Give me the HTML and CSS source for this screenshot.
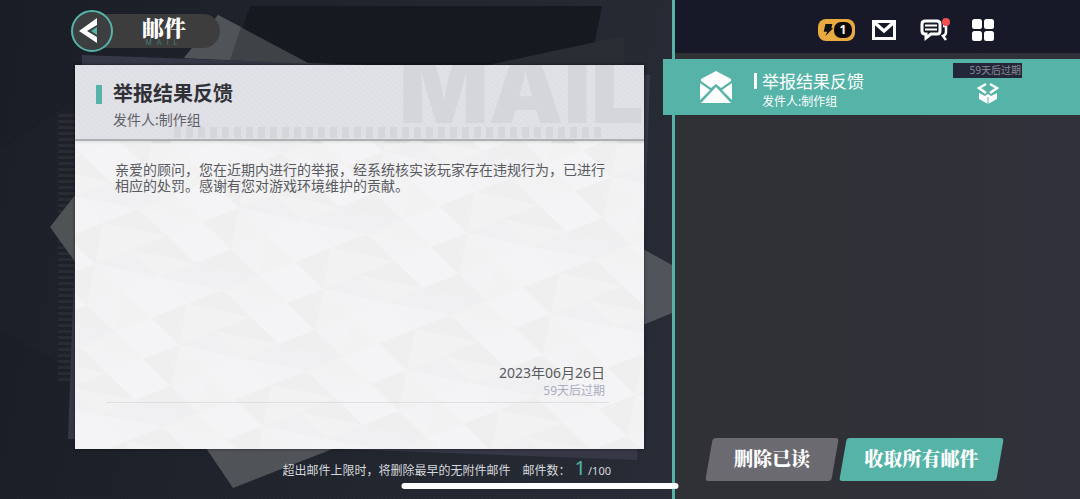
FILE: index.html
```
<!DOCTYPE html>
<html lang="zh-CN">
<head>
    <meta charset="utf-8">
    <meta name="viewport" content="width=device-width, initial-scale=1">
    <title>邮件</title>
    <link rel="stylesheet" href="styles.css">
</head>
<body>
    <main class="reader">
        <svg class="backdrop" viewBox="0 0 672 499" preserveAspectRatio="none" aria-hidden="true">
            <defs>
                <pattern id="dashes" width="20" height="6" patternUnits="userSpaceOnUse">
                    <rect width="20" height="3" fill="#2b2e34"/>
                </pattern>
                <pattern id="weave" width="4" height="4" patternUnits="userSpaceOnUse">
                    <path d="M0 0h1v1H0zM2 2h1v1H2z" fill="#fff" fill-opacity=".035"/>
                </pattern>
            </defs>
            <path d="M250 6H602L590 66H230z" fill="#15181f"/>
            <path d="M0 150L90 90V380L0 330z" fill="#fff" fill-opacity=".012"/>
            <rect width="672" height="499" fill="url(#weave)"/>
            <path d="M58 114H76V382H58z" fill="url(#dashes)" opacity=".8"/>
            <path d="M82 55L650 75L637 460L68 439z" fill="#363847"/>
            <path d="M218 15L310 64L184 58z" fill="#3f4246"/>
            <path d="M218 15L241 27L230 60L184 58z" fill="#505458"/>
            <path d="M488 65L624 36V65z" fill="#2a2e34"/>
            <path d="M50 227L76 194V263z" fill="#505356"/>
            <path d="M206 448L233 488L335 448z" fill="#505459"/>
            <path d="M643 249L672 265V313L643 325z" fill="#50545b"/>
        </svg>

        <header class="title-bar">
            <button class="back" type="button" aria-label="返回">
                <svg viewBox="0 0 42 42">
                    <circle cx="21" cy="21" r="20" fill="#3d3e3f" stroke="#55b3a7" stroke-width="2"/>
                    <path d="M26 8V15L16 21L26 27V33L8 21z" fill="#fff"/>
                    <path d="M26 17V25L20 21z" fill="#55b3a7"/>
                </svg>
            </button>
            <div class="title-pill">
                <h1>邮件</h1>
                <span>MAIL</span>
            </div>
        </header>

        <article class="letter">
            <header class="letter-head">
                <span class="watermark" aria-hidden="true">MAIL</span>
                <h2>举报结果反馈</h2>
                <p>发件人:制作组</p>
            </header>
            <div class="letter-body">
                <svg class="facets" aria-hidden="true">
                    <defs>
                        <pattern id="facet" width="4" height="3" patternUnits="userSpaceOnUse" patternTransform="matrix(36 -14 28 27 8 14)">
                            <path d="M0 0H1V1H0zM2 1H3V2H2zM1 2H2V3H1z" fill="#f5f6f8"/>
                            <path d="M1 0H2L1 1zM3 0H4V1zM0 1H1V2zM2 2H3L2 3zM3 2H4V3z" fill="#ececed"/>
                            <path d="M2 0L3 1H2zM1 1H2L1 2zM3 1L4 2H3zM0 2L1 3H0z" fill="#f4f4f6"/>
                            <path d="M2 0H3V1zM3 1H4V2zM0 1L1 2H0z" fill="#eeeef1"/>
                        </pattern>
                    </defs>
                    <rect width="100%" height="100%" fill="url(#facet)" opacity=".5"/>
                </svg>
                <p class="message">亲爱的顾问，您在近期内进行的举报，经系统核实该玩家存在违规行为，已进行相应的处罚。感谢有您对游戏环境维护的贡献。</p>
                <div class="signed">
                    <time datetime="2023-06-26">2023年06月26日</time>
                    <span>59天后过期</span>
                </div>
            </div>
        </article>

        <footer class="capacity">
            <span>超出邮件上限时，将删除最早的无附件邮件</span>
            <span>邮件数：</span>
            <span class="count"><b>1</b>/100</span>
        </footer>
    </main>

    <aside class="inbox">
        <nav class="toolbar">
            <button type="button" aria-label="体力 1" class="energy">
                <svg viewBox="0 0 14 16"><path d="M4 1H12L11 6H13L4 15L6 10H2z" fill="#111"/></svg>
                <span>1</span>
            </button>
            <button type="button" aria-label="邮件">
                <svg width="24" height="20" viewBox="0 0 24 20">
                    <path d="M1.500 1.500H22.500V18.500H1.500z" fill="none" stroke="#fff" stroke-width="3"/>
                    <path d="M3 3L12 11L21 3" fill="none" stroke="#fff" stroke-width="3.500"/>
                </svg>
            </button>
            <button type="button" aria-label="聊天">
                <svg width="30" height="24" viewBox="0 0 30 24">
                    <path d="M5 3H17Q20 3 20 6V13Q20 16 17 16H11L6 20V16H5Q2 16 2 13V6Q2 3 5 3z" fill="none" stroke="#fff" stroke-width="3"/>
                    <path d="M5 7.500H17M5 11.500H17" stroke="#fff" stroke-width="2"/>
                    <path d="M23 8H26V14Q26 17 23 18L26 22" fill="none" stroke="#fff" stroke-width="2.500"/>
                    <circle cx="26" cy="4" r="4" fill="#ef514f"/>
                </svg>
            </button>
            <button type="button" aria-label="菜单">
                <svg width="22" height="22" viewBox="0 0 22 22" fill="#fff">
                    <rect width="10" height="10" rx="2.500"/>
                    <rect x="12" width="10" height="10" rx="2.500"/>
                    <rect y="12" width="10" height="10" rx="2.500"/>
                    <rect x="12" y="12" width="10" height="10" rx="2.500"/>
                </svg>
            </button>
        </nav>

        <ul class="mails">
            <li>
                <button class="mail" type="button">
                    <svg class="envelope" viewBox="0 0 32 32" fill="#fff">
                        <path d="M16 0L31 8V10L21 17L16 13L11 17L1 10V8z"/>
                        <path d="M0 12L10 19L0 29zM32 12L22 19L32 29z"/>
                        <path d="M16 16L31 32H1z"/>
                    </svg>
                    <span class="summary">
                        <span class="subject">举报结果反馈</span>
                        <span class="sender">发件人:制作组</span>
                    </span>
                    <span class="status">
                        <span class="expiry">59天后过期</span>
                        <svg width="24" height="22" viewBox="0 0 24 22">
                            <path d="M10 2L3 6L10 11M14 2L21 6L14 11" fill="none" stroke="#fff" stroke-width="2.500"/>
                            <path d="M3 11L9 14L12 12L15 14L21 11V17L12 22L3 17z" fill="#fff"/>
                            <path d="M12 15V22" stroke="#55b3a7"/>
                        </svg>
                    </span>
                </button>
            </li>
        </ul>

        <div class="actions">
            <button class="action" type="button">删除已读</button>
            <button class="action claim" type="button">收取所有邮件</button>
        </div>
    </aside>

    <div class="home-bar"></div>
</body>
</html>
```
FILE: styles.css
```
* {
    margin: 0;
    padding: 0;
    box-sizing: border-box;
}

body {
    display: grid;
    grid-template-columns: 5fr 3fr;
    min-height: 100vh;
    background: #303138;
    font-family: "Noto Sans", "Noto Sans CJK SC", sans-serif;
    overflow: hidden;
}

button {
    border: none;
    background: none;
    color: inherit;
    font-family: inherit;
    cursor: pointer;
}

svg {
    display: block;
}

/* left side: open mail */
.reader {
    position: relative;
    z-index: 0;
    display: flex;
    flex-direction: column;
    padding: 10px 28px 0 71px;
    border-right: 3px solid #55b3a7;
    background: linear-gradient(100deg, #191c25, #20252e 60%, #262b35);
}

.backdrop {
    position: absolute;
    inset: 0;
    width: 100%;
    height: 100%;
    z-index: -1;
}

.title-bar {
    display: flex;
    align-items: center;
}

.back {
    z-index: 1;
}

.back svg {
    width: 42px;
    height: 42px;
}

.title-pill {
    display: flex;
    flex-direction: column;
    align-items: center;
    justify-content: center;
    width: 128px;
    height: 34px;
    margin-left: -21px;
    padding-left: 16px;
    border-radius: 0 17px 17px 0;
    background: #3d3d3d;
}

.title-pill h1 {
    color: #fff;
    font-family: "Noto Serif CJK SC", "Noto Sans CJK SC", serif;
    font-size: 22px;
    font-weight: 900;
    line-height: 24px;
}

.title-pill span {
    color: #458078;
    font-family: Inter, sans-serif;
    font-size: 7px;
    line-height: 8px;
    letter-spacing: 5px;
}

.letter {
    flex: 1;
    display: flex;
    flex-direction: column;
    margin: 13px 0 0 4px;
    background: #f2f2f3;
    box-shadow: 0 0 3px #0008;
}

.letter-head {
    position: relative;
    z-index: 0;
    height: 76px;
    padding: 15px 38px;
    overflow: hidden;
    border-bottom: 2px solid #aeb0b3;
    background: repeating-linear-gradient(45deg, #e1e2e7 0 2px, #dedfe4 2px 4px);
    box-shadow: 0 1px 3px #0003;
}

.letter-head::after {
    content: "";
    position: absolute;
    z-index: -1;
    right: 38px;
    bottom: 1px;
    width: 432px;
    height: 11px;
    background: repeating-linear-gradient(90deg, #d5d6da 0 7px, transparent 7px 12px);
}

.watermark {
    position: absolute;
    z-index: -1;
    right: 0;
    bottom: 10px;
    color: #d5d6da;
    font-family: Inter, sans-serif;
    font-size: 94px;
    font-weight: 900;
    line-height: 80px;
}

.letter-head h2 {
    margin-left: -17px;
    padding-left: 17px;
    background: linear-gradient(#55b3a7, #55b3a7) 0 5px / 6px 19px no-repeat;
    color: #303136;
    font-size: 20px;
    line-height: 28px;
}

.letter-head p {
    color: #606166;
    font-size: 14px;
    line-height: 24px;
}

.letter-body {
    position: relative;
    z-index: 0;
    flex: 1;
    display: flex;
    flex-direction: column;
    justify-content: space-between;
    padding: 21px 35px 46px 31px;
}

.facets {
    position: absolute;
    inset: 0;
    width: 100%;
    height: 100%;
    z-index: -1;
}

.message {
    padding-left: 9px;
    color: #595a60;
    font-size: 14px;
    line-height: 16px;
}

.signed {
    display: flex;
    flex-direction: column;
    align-items: flex-end;
    padding: 0 4px 2px 0;
    border-bottom: 1px solid #dedfe1;
    color: #5a5b61;
    font-size: 14px;
    line-height: 18px;
}

.signed span {
    color: #aaacc0;
    font-size: 12px;
}

.capacity {
    display: flex;
    align-items: baseline;
    justify-content: flex-end;
    height: 50px;
    padding: 4px 33px 0 0;
    gap: 12px;
    color: #d6d8dc;
    font-size: 12px;
    line-height: 30px;
}

.capacity .count {
    margin-left: -8px;
    font-size: 11px;
}

.capacity b {
    margin-right: 2px;
    color: #55b3a7;
    font-size: 20px;
    font-weight: 400;
}

/* right side: list of mails */
.inbox {
    display: flex;
    flex-direction: column;
    background: linear-gradient(90deg, #303135, #30313a);
}

.toolbar {
    display: grid;
    grid-template-columns: 37px 31px 35px 22px;
    justify-content: end;
    align-items: center;
    gap: 17px;
    height: 53px;
    padding: 7px 86px 0 0;
    background: #171929;
}

.energy {
    display: flex;
    align-items: center;
    height: 22px;
    padding: 0 3px 0 4px;
    border-radius: 8px;
    background: #e9aa3f;
}

.energy svg {
    width: 12px;
    height: 14px;
}

.energy span {
    flex: 1;
    border-radius: 7px;
    background: #0b0b0c;
    color: #fff;
    font-size: 12px;
    font-weight: 700;
    line-height: 16px;
}

.mails {
    flex: 1;
    list-style: none;
    padding-top: 6px;
}

.mails li {
    position: relative;
    z-index: 1;
    margin-left: -12px;
}

.mail {
    display: flex;
    align-items: flex-start;
    width: 100%;
    height: 56px;
    padding: 4px 58px 0 37px;
    background: #55b3a7;
    color: #fff;
    text-align: left;
}

.envelope {
    width: 32px;
    height: 32px;
    margin: 8px 22px 0 0;
}

.summary {
    flex: 1;
    padding-top: 10px;
}

.summary span {
    display: block;
}

.subject {
    padding-left: 8px;
    background: linear-gradient(#fff, #fff) 0 0 / 3px 16px no-repeat;
    font-size: 17px;
    line-height: 18px;
}

.sender {
    padding-left: 8px;
    font-size: 12px;
    line-height: 22px;
}

.status {
    display: flex;
    flex-direction: column;
    align-items: center;
    gap: 4px;
}

.expiry {
    width: 69px;
    padding-right: 1px;
    background: #24273a;
    color: #898b94;
    font-size: 10px;
    line-height: 15px;
    text-align: right;
}

.actions {
    display: flex;
    gap: 8px;
    padding: 0 80px 18px 34px;
}

.action {
    position: relative;
    z-index: 0;
    flex: 4;
    height: 43px;
    color: #fff;
    font-family: "Noto Serif CJK SC", "Noto Sans CJK SC", serif;
    font-size: 19px;
    font-weight: 900;
    line-height: 38px;
    padding-bottom: 4px;
    white-space: nowrap;
}

.action::before {
    content: "";
    position: absolute;
    inset: 0;
    z-index: -1;
    border-radius: 3px;
    background: #6b6a70;
    transform: skewX(-10deg);
}

.claim {
    flex: 5;
}

.claim::before {
    background: #55b3a7;
}

.home-bar {
    position: absolute;
    left: 50%;
    bottom: 10px;
    z-index: 2;
    width: 277px;
    height: 6px;
    border-radius: 3px;
    background: #fff;
    transform: translateX(-50%);
}
```
